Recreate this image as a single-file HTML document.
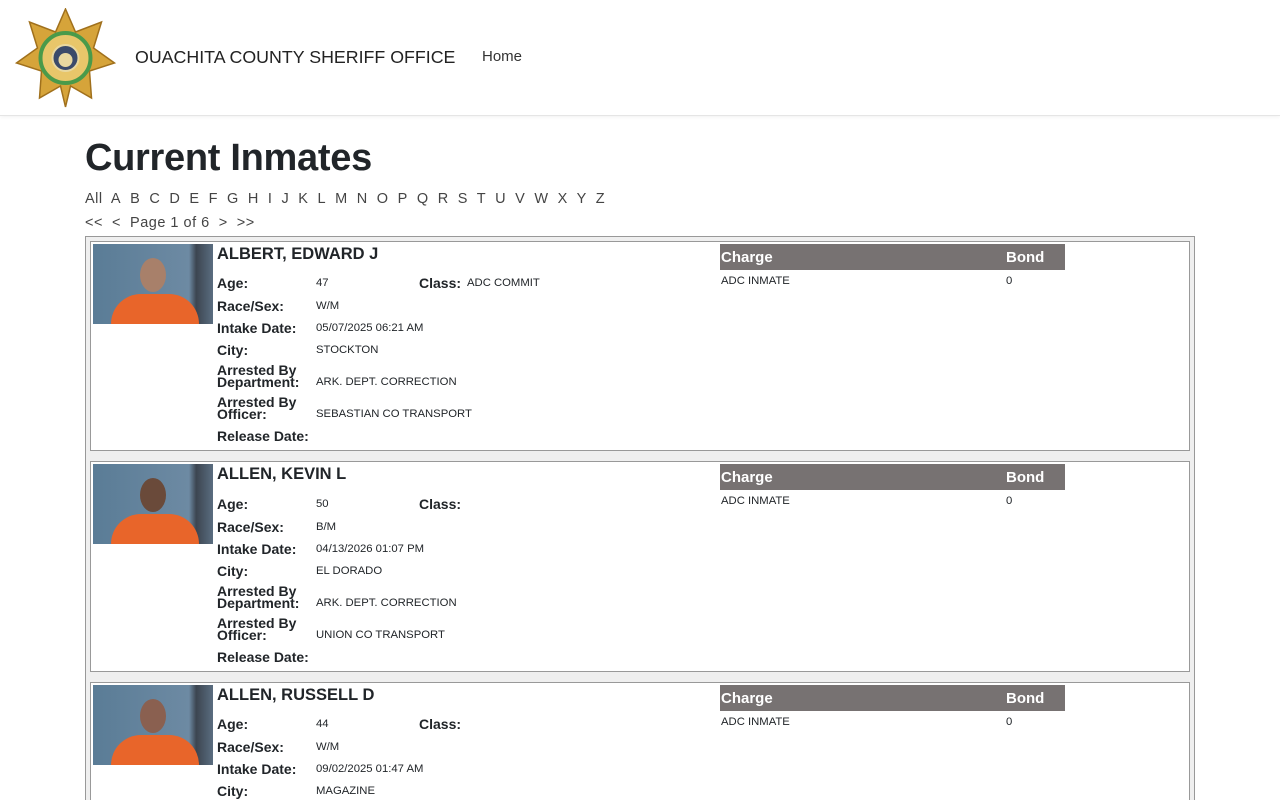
<!DOCTYPE html>
<html style="height:800px;overflow:hidden"><head><meta charset="utf-8"><style>
body{margin:0;background:#fff;font-family:"Liberation Sans",sans-serif;color:#212529;width:1280px;height:800px;overflow:hidden;position:relative}
.hdr{position:absolute;left:0;top:0;width:1280px;height:115px;border-bottom:1px solid #e5e5e5;box-shadow:0 1px 4px rgba(0,0,0,.06)}
.brand{position:absolute;left:135px;top:47px;font-size:17.8px;color:#222}
.home{position:absolute;left:482px;top:48px;font-size:15px;color:#333}
h1{position:absolute;left:85px;top:137px;margin:0;font-size:38px;font-weight:700;letter-spacing:-.3px}
.az{position:absolute;left:85px;top:191px;font-size:14.5px;color:#444;letter-spacing:.5px}
.pg{position:absolute;left:85px;top:215px;font-size:14.5px;color:#444;letter-spacing:.5px}
.outer{position:absolute;left:85px;top:236px;width:1108px;height:600px;border:1px solid #999;background:#efefef}
.rec{position:absolute;left:90px;width:1098px;height:208px;border:1px solid #999;background:#fff}
.rec *{position:absolute;margin:0;white-space:nowrap}
.ph{left:2px;top:2px;width:120px;height:80px;background:linear-gradient(90deg,#5a7c96 0,#6d8aa3 80%,#3c4550 86%,#5a6d80 100%);overflow:hidden}
.ph .body{left:18px;top:50px;width:88px;height:40px;background:#e8652a;border-radius:30px 30px 0 0}
.ph .head{left:47px;top:14px;width:26px;height:34px;background:#a8806a;border-radius:50%}
.nm{left:126px;top:3px;font-size:16.5px;font-weight:700}
.l{left:126px;font-size:14px;font-weight:700;line-height:12px}
.v{left:225px;font-size:11.3px}
.ch{left:629px;top:2px;width:345px;height:26px;background:#777272;color:#fff;font-size:15px;font-weight:700}
.ch span{top:5px}
.cr{font-size:11.3px;top:33px}
</style></head><body>
<div class="hdr">
<svg style="position:absolute;left:15px;top:8px" width="101" height="100" viewBox="0 0 100 100">
<polygon points="50,1 60,24 86,14 78,40 99,55 74,63 76,90 55,78 50,99 45,78 24,90 26,63 1,55 22,40 14,14 40,24" fill="#d6a43a" stroke="#a0701c" stroke-width="1.5"/>
<circle cx="50" cy="50" r="25" fill="#e8c66a" stroke="#4a9a4a" stroke-width="4"/>
<circle cx="50" cy="50" r="13" fill="#3a4a6a" stroke="#e8d8a0" stroke-width="2"/>
<circle cx="50" cy="52" r="7" fill="#e8d8a0"/>
</svg>
<div class="brand">OUACHITA COUNTY SHERIFF OFFICE</div>
<div class="home">Home</div>
</div>
<h1>Current Inmates</h1>
<div class="az">All&nbsp; A&nbsp; B&nbsp; C&nbsp; D&nbsp; E&nbsp; F&nbsp; G&nbsp; H&nbsp; I&nbsp; J&nbsp; K&nbsp; L&nbsp; M&nbsp; N&nbsp; O&nbsp; P&nbsp; Q&nbsp; R&nbsp; S&nbsp; T&nbsp; U&nbsp; V&nbsp; W&nbsp; X&nbsp; Y&nbsp; Z</div>
<div class="pg">&lt;&lt;&nbsp; &lt;&nbsp; Page 1 of 6&nbsp; &gt;&nbsp; &gt;&gt;</div>
<div class="outer"></div>

<div class="rec" style="top:241px">
<div class="ph"><div class="body"></div><div class="head"></div></div>
<div class="nm">ALBERT, EDWARD J</div>
<div class="l" style="top:35px">Age:</div><div class="v" style="top:35px">47</div>
<div class="l" style="top:35px;left:328px">Class:</div><div class="v" style="top:35px;left:376px">ADC COMMIT</div>
<div class="l" style="top:58px">Race/Sex:</div><div class="v" style="top:58px">W/M</div>
<div class="l" style="top:80px">Intake Date:</div><div class="v" style="top:80px">05/07/2025 06:21 AM</div>
<div class="l" style="top:102px">City:</div><div class="v" style="top:102px">STOCKTON</div>
<div class="l" style="top:122px">Arrested By<br>Department:</div><div class="v" style="top:134px">ARK. DEPT. CORRECTION</div>
<div class="l" style="top:154px">Arrested By<br>Officer:</div><div class="v" style="top:166px">SEBASTIAN CO TRANSPORT</div>
<div class="l" style="top:188px">Release Date:</div>
<div class="ch"><span style="left:1px">Charge</span><span style="left:286px">Bond</span></div>
<div class="cr" style="left:630px">ADC INMATE</div><div class="cr" style="left:915px">0</div>
</div>

<div class="rec" style="top:461px;height:209px">
<div class="ph"><div class="body"></div><div class="head" style="background:#6a4a3a"></div></div>
<div class="nm">ALLEN, KEVIN L</div>
<div class="l" style="top:36px">Age:</div><div class="v" style="top:36px">50</div>
<div class="l" style="top:36px;left:328px">Class:</div>
<div class="l" style="top:59px">Race/Sex:</div><div class="v" style="top:59px">B/M</div>
<div class="l" style="top:81px">Intake Date:</div><div class="v" style="top:81px">04/13/2026 01:07 PM</div>
<div class="l" style="top:103px">City:</div><div class="v" style="top:103px">EL DORADO</div>
<div class="l" style="top:123px">Arrested By<br>Department:</div><div class="v" style="top:135px">ARK. DEPT. CORRECTION</div>
<div class="l" style="top:155px">Arrested By<br>Officer:</div><div class="v" style="top:167px">UNION CO TRANSPORT</div>
<div class="l" style="top:189px">Release Date:</div>
<div class="ch"><span style="left:1px">Charge</span><span style="left:286px">Bond</span></div>
<div class="cr" style="left:630px">ADC INMATE</div><div class="cr" style="left:915px">0</div>
</div>

<div class="rec" style="top:682px;height:130px">
<div class="ph"><div class="body"></div><div class="head" style="background:#8a6050"></div></div>
<div class="nm">ALLEN, RUSSELL D</div>
<div class="l" style="top:35px">Age:</div><div class="v" style="top:35px">44</div>
<div class="l" style="top:35px;left:328px">Class:</div>
<div class="l" style="top:58px">Race/Sex:</div><div class="v" style="top:58px">W/M</div>
<div class="l" style="top:80px">Intake Date:</div><div class="v" style="top:80px">09/02/2025 01:47 AM</div>
<div class="l" style="top:102px">City:</div><div class="v" style="top:102px">MAGAZINE</div>
<div class="ch"><span style="left:1px">Charge</span><span style="left:286px">Bond</span></div>
<div class="cr" style="left:630px">ADC INMATE</div><div class="cr" style="left:915px">0</div>
</div>
</body></html>
